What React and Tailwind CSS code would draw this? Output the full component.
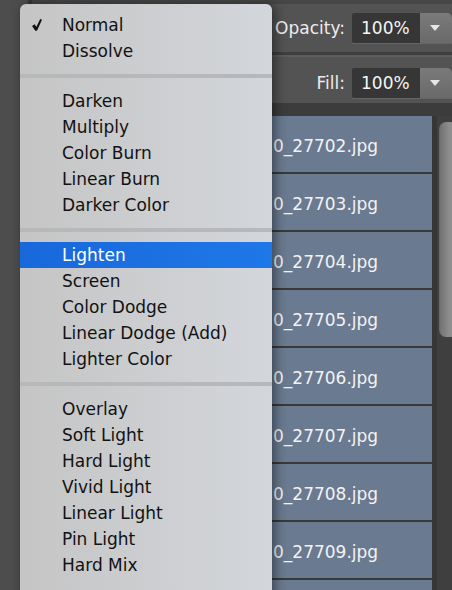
import React from "react";

const groups = [
  ["Normal", "Dissolve"],
  ["Darken", "Multiply", "Color Burn", "Linear Burn", "Darker Color"],
  ["Lighten", "Screen", "Color Dodge", "Linear Dodge (Add)", "Lighter Color"],
  ["Overlay", "Soft Light", "Hard Light", "Vivid Light", "Linear Light", "Pin Light", "Hard Mix"],
];

const files = ["27702", "27703", "27704", "27705", "27706", "27707", "27708", "27709"];

function Caret() {
  return (
    <svg width="10" height="6" viewBox="0 0 10 6">
      <path d="M0 0 H10 L5 6 Z" fill="#e6e6e6" />
    </svg>
  );
}

function Field({ label }) {
  return (
    <div className="flex items-start justify-end">
      <span className="mr-[7px] h-[30px] leading-[30px] text-[#ececec]">{label}</span>
      <div className="flex border-b border-[#656565]">
        <div className="w-[68px] h-[30px] bg-[#363636] rounded-l-[2px] pl-[9px] leading-[30px] text-[#f4f4f4]">100%</div>
        <div className="w-[32px] h-[30px] bg-linear-to-b from-[#7a7a7a] to-[#6a6a6a] rounded-tr-[5px] flex items-center pl-[10px]">
          <Caret />
        </div>
      </div>
    </div>
  );
}

export default function App() {
  return (
    <div className="relative w-[452px] h-[590px] overflow-hidden bg-[#4d4d4d] flex font-['DejaVu_Sans',sans-serif] text-[17px]">
      <div className="w-[28px] shrink-0 bg-[#4d4d4d]" />
      <div className="w-[4px] shrink-0 bg-[#383838]" />
      <div className="flex-1 flex flex-col bg-[#535353] min-h-0">
        <div className="h-[4px] shrink-0 bg-[#474747]" />
        <div className="h-[48px] shrink-0 pt-[9px]">
          <Field label="Opacity:" />
        </div>
        <div className="h-[3px] shrink-0 bg-[#3e3e3e]" />
        <div className="h-[2px] shrink-0 bg-[#5c5c5c]" />
        <div className="h-[46px] shrink-0 pt-[11px]">
          <Field label="Fill:" />
        </div>
        <div className="flex-1 min-h-0 overflow-hidden flex bg-[#3c3c3c] pt-[13px]">
          <div className="flex-1 flex flex-col">
            {files.map((f) => (
              <div key={f} className="h-[58px] shrink-0 bg-[#6a7a91] border-b-2 border-[#393939] flex items-center pl-[241px] pt-[5px] text-[#f3f3f3]">
                0_{f}.jpg
              </div>
            ))}
            <div className="h-[58px] shrink-0 bg-[#6a7a91]" />
          </div>
          <div className="w-[20px] shrink-0 border-l-[5px] border-[#363636] bg-[#3f3f3f] pt-[6px]">
            <div className="ml-[2px] w-[18px] h-[215px] rounded-[7px] bg-linear-to-r from-[#737373] via-[#8c8c8c] to-[#969696] border-l border-[#6a6a6a]" />
          </div>
        </div>
      </div>

      <div className="absolute left-[20px] top-[4px] w-[252px] h-[600px] rounded-t-[6px] bg-linear-to-r from-[#c5c5c5] to-[#d3d6db] shadow-[3px_0_12px_rgba(0,0,0,0.45)] pt-[8px] text-[#121212]">
        {groups.map((g, gi) => (
          <div key={gi}>
            {gi > 0 && <div className="my-[10px] h-[4px] bg-[#b7b8ba]" />}
            {g.map((item) => {
              const active = item === "Lighten";
              return (
                <div
                  key={item}
                  className={
                    active
                      ? "relative h-[26px] leading-[26px] pl-[42px] text-white bg-linear-to-r from-[#1868da] to-[#1f78e8]"
                      : "relative h-[26px] leading-[26px] pl-[42px]"
                  }
                >
                  {item === "Normal" && (
                    <svg className="absolute left-[12px] top-[7px]" width="10" height="12" viewBox="0 0 10 12">
                      <path d="M0 7 L2.8 5.2 L4.3 7.9 L8.2 0 L10 0.8 L5 11.8 L3.3 11.8 Z" fill="#111" />
                    </svg>
                  )}
                  {item}
                </div>
              );
            })}
          </div>
        ))}
      </div>
    </div>
  );
}
